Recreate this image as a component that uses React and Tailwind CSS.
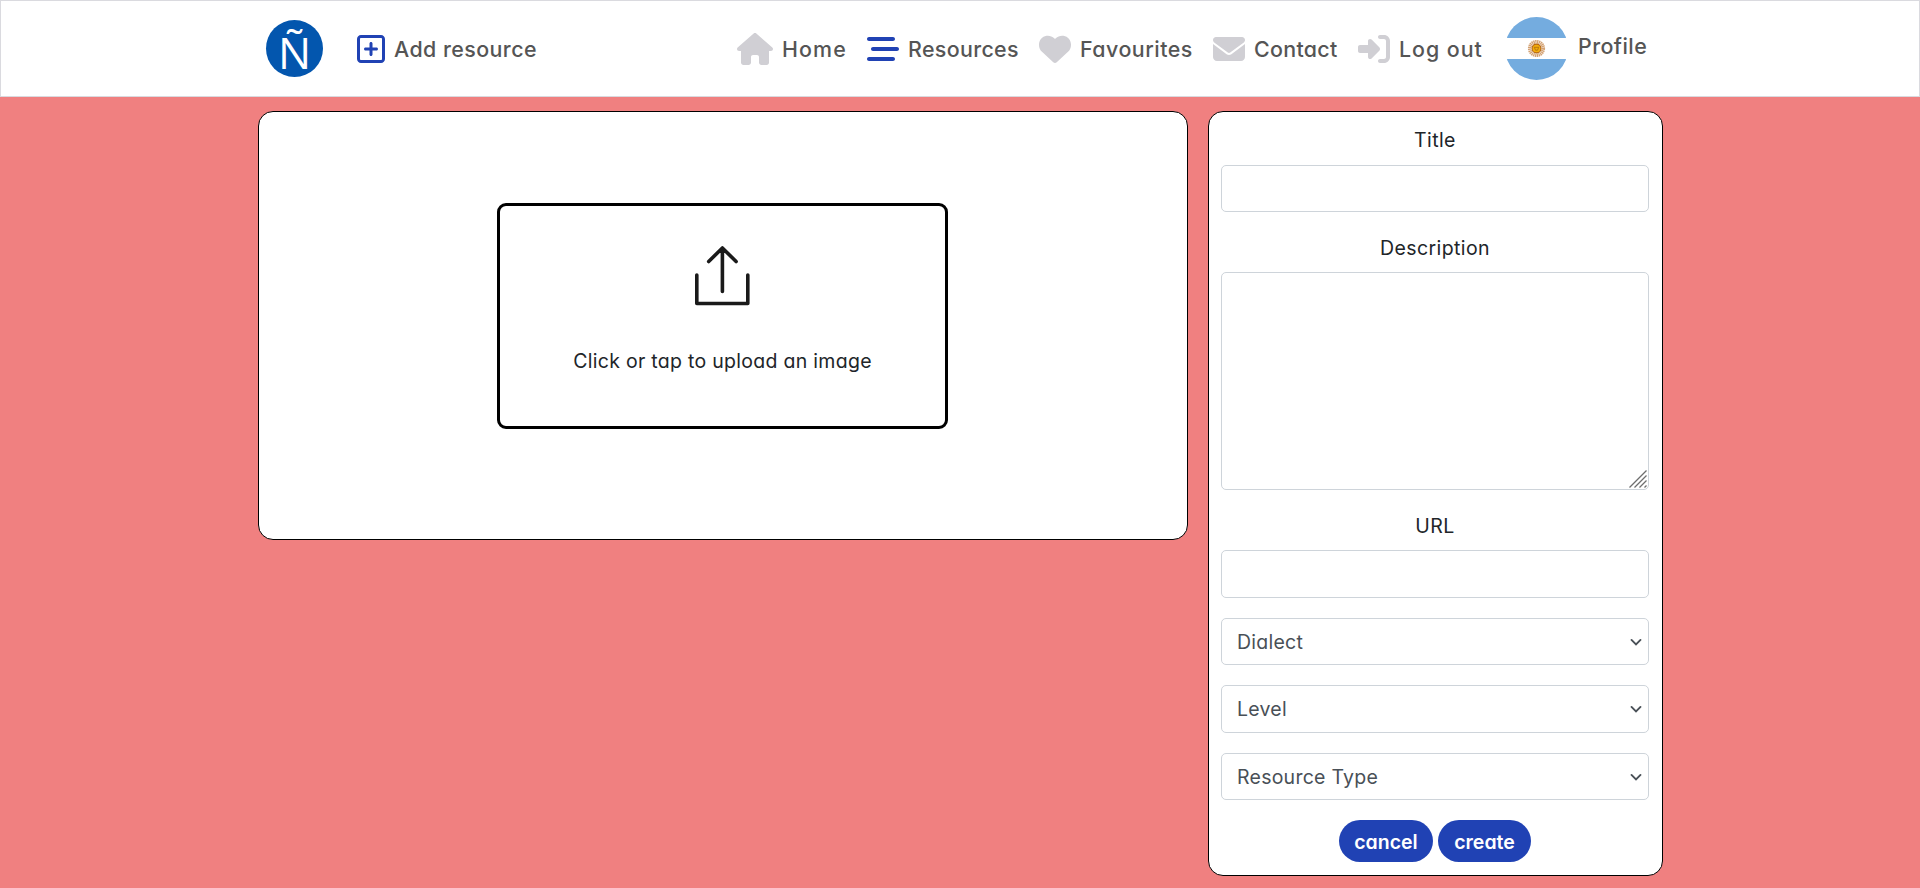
import { FaHouse, FaBarsStaggered, FaHeart, FaEnvelope, FaRightToBracket, FaRegSquarePlus } from "react-icons/fa6";

const selects = [
  { label: "Dialect", height: "h-[47px]" },
  { label: "Level", height: "h-[48px]" },
  { label: "Resource Type", height: "h-[47px]" },
];

function NavItem({ icon: Icon, label, className, iconClass = "w-8", textClass = "", active }) {
  return (
    <a className={`flex h-8 shrink-0 items-center gap-[9px] ${className}`}>
      <Icon className={`h-8 shrink-0 ${iconClass} ${active ? "text-[#2042b4]" : "text-[#d0cfd4]"}`} />
      <span className={`mt-0.5 whitespace-nowrap ${textClass}`}>{label}</span>
    </a>
  );
}

function Label({ children, className = "h-10" }) {
  return <label className={`leading-[30px] tracking-[0.4px] ${className}`}>{children}</label>;
}

export default function App() {
  return (
    <div className="h-[888px] overflow-hidden bg-[#f08080] font-['Inter',sans-serif] text-[19.5px] text-[#212529] [font-feature-settings:'cv11']">
      <header className="h-[97px] border border-[#dadadf] bg-white text-[21.4px] font-medium text-[#555]">
        <div className="flex h-[95px] items-center pl-[265px]">
          <svg className="h-[57px] w-[57px] shrink-0 overflow-visible" viewBox="0 0 57 57">
            <circle cx="28.5" cy="28.5" r="28.5" fill="#0356ae" />
            <text x="28.5" y="48.5" textAnchor="middle" fontFamily="Open Sans" fontSize="44" fill="#fff">Ñ</text>
          </svg>
          <NavItem icon={FaRegSquarePlus} label="Add resource" active iconClass="w-7" textClass="tracking-[0.44px]" className="ml-[34px] w-[380px]" />
          <NavItem icon={FaHouse} label="Home" iconClass="w-9" textClass="tracking-[1.1px]" className="w-[130px]" />
          <NavItem icon={FaBarsStaggered} label="Resources" active textClass="tracking-[0.35px]" className="w-[172px]" />
          <NavItem icon={FaHeart} label="Favourites" textClass="tracking-[0.5px]" className="w-[174px]" />
          <NavItem icon={FaEnvelope} label="Contact" textClass="tracking-[0.3px]" className="w-[145px]" />
          <NavItem icon={FaRightToBracket} label="Log out" textClass="tracking-[0.95px]" className="w-[147px]" />
          <svg className="h-[63px] w-[63px] shrink-0" viewBox="0 0 63 63">
            <clipPath id="disc"><circle cx="31.5" cy="31.5" r="31.5" /></clipPath>
            <g clipPath="url(#disc)">
              <path fill="#74acdf" d="M0 0h63v21H0zM0 42h63v21H0z" />
            </g>
            <circle cx="31.5" cy="31.5" r="6.8" fill="none" stroke="#d3a172" strokeWidth="3.6" strokeDasharray="1.3 0.5" />
            <circle cx="31.5" cy="31.5" r="4.4" fill="#f3ad0c" stroke="#b5650f" strokeWidth="1.1" />
            <path d="M29.300 30.300h4.400l-1.200 2.900h-2z" fill="none" stroke="#a8690f" strokeWidth=".8" />
          </svg>
          <span className="-mt-1 ml-[10px] tracking-[0.45px]">Profile</span>
        </div>
      </header>
      <main className="flex items-start gap-5 pl-[258px] pt-[14px]">
        <section className="flex h-[429px] w-[930px] rounded-[15px] border border-black bg-white pl-[238px] pt-[91px]">
          <div className="flex h-[226px] w-[451px] flex-col items-center rounded-[9px] border-[3px] border-black pt-[38px]">
            <svg className="h-[64px] w-[64px]" viewBox="0 0 64 64" fill="none" stroke="#1a1a1a" strokeWidth="3.6" strokeLinecap="round" strokeLinejoin="round">
              <path d="M5.800 31v28.500h51v-28.500M31.400 47.500v-43M17.700 17.500l13.700-13.500l13.700 13.500" />
            </svg>
            <p className="mt-[39px] tracking-[0.29px]">Click or tap to upload an image</p>
          </div>
        </section>
        <form className="flex h-[765px] w-[455px] flex-col items-center rounded-[15px] border border-black bg-white pl-3 pr-[13px] pt-[13px]">
          <Label>Title</Label>
          <input className="h-[47px] w-full shrink-0 rounded-[5px] border border-[#ced4da]" />
          <Label className="mt-[21px] h-[39px]">Description</Label>
          <div className="relative h-[218px] w-full shrink-0">
            <textarea className="block h-full w-full resize-none rounded-[5px] border border-[#ced4da]" />
            <svg className="absolute bottom-[2px] right-[2px] h-[18px] w-[18px]" viewBox="0 0 18 18" stroke="#6e6e6e" strokeWidth="1.3">
              <path d="M.500 17.500l17-17M5.500 17.500l12-12M10.500 17.500l7-7M15.500 17.500l2-2" />
            </svg>
          </div>
          <Label className="mt-[21px] h-[39px]">URL</Label>
          <input className="h-[48px] w-full shrink-0 rounded-[5px] border border-[#ced4da]" />
          {selects.map(({ label, height }) => (
            <div key={label} className={`mt-5 flex w-full shrink-0 items-center justify-between rounded-[5px] border border-[#ced4da] pl-[15px] pr-[6px] tracking-[0.25px] text-[#495057] ${height}`}>
              <span className="pt-0.5">{label}</span>
              <svg className="h-3 w-3" viewBox="0 0 12 12" fill="none" stroke="#495057" strokeWidth="1.9" strokeLinecap="round"><path d="M1.500 3.900l4.500 4.500l4.500-4.500" /></svg>
            </div>
          ))}
          <div className="mt-5 flex gap-[5px] font-semibold text-white">
            <button type="button" className="h-[42px] w-[94px] rounded-full bg-[#2042b4] pt-[3px]">cancel</button>
            <button type="button" className="h-[42px] w-[93px] rounded-full bg-[#2042b4] pt-[3px]">create</button>
          </div>
        </form>
      </main>
    </div>
  );
}
